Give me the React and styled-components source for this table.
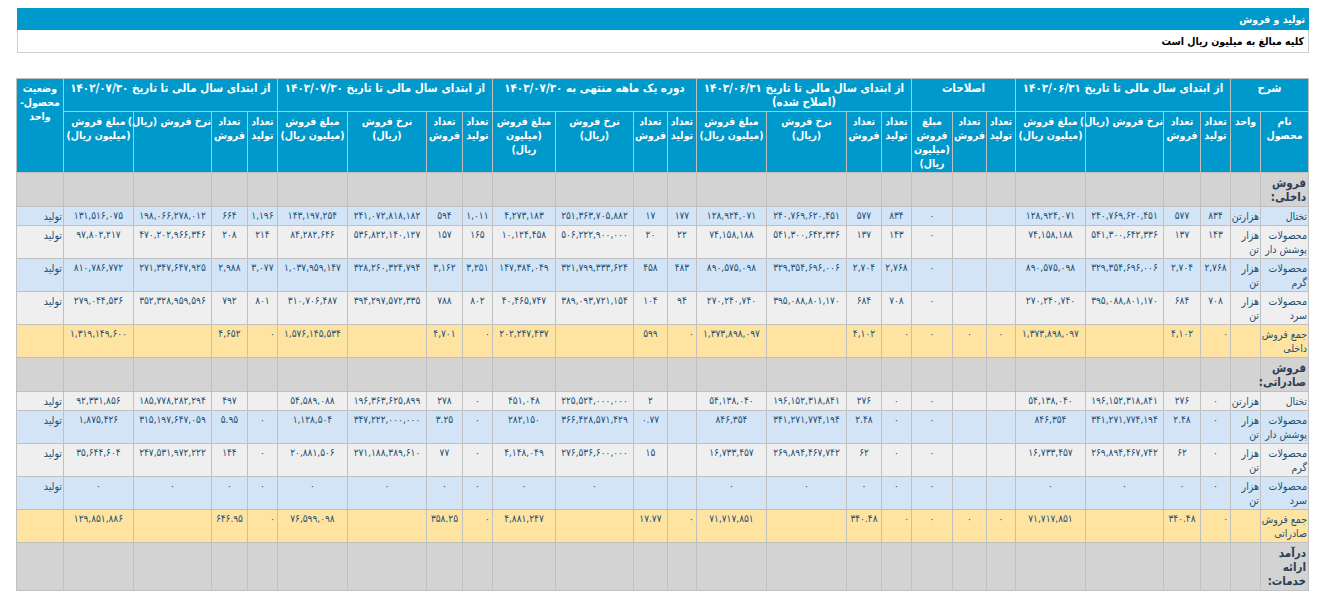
import styled, { createGlobalStyle } from 'styled-components';

const GlobalStyle = createGlobalStyle`
  body {
    margin: 0;
    background: #fff;
    font-family: "DejaVu Sans Condensed", "DejaVu Sans", sans-serif;
  }
`;

const Page = styled.div`
  width: 1292px;
  padding: 8px 0 0 17px;
  direction: rtl;
`;

const TitleBar = styled.div`
  background: #0099cc;
  color: #fff;
  font-weight: bold;
  font-size: 10.5px;
  height: 22px;
  line-height: 22px;
  padding: 0 4px;
`;

const Note = styled.div`
  border: 1px solid #cfcfcf;
  border-top: 0;
  height: 22px;
  line-height: 22px;
  padding: 0 4px;
  font-weight: bold;
  font-size: 10.5px;
  color: #000;
`;

const Table = styled.table`
  margin-top: 25px;
  width: 1292px;
  table-layout: fixed;
  border-collapse: collapse;
  font-size: 10px;
`;

const Col = styled.col`
  width: ${(p) => p.$w}px;
`;

const Th = styled.th`
  background: #0099cc;
  color: #fff;
  font-weight: bold;
  font-size: ${(p) => (p.$group ? 11.5 : 10.5)}px;
  border: 1px solid #c0c0c0;
  padding: 2px 0;
  line-height: 14px;
  vertical-align: top;
  text-align: center;
  white-space: nowrap;
`;

const tones = {
  blue: '#d2e4f5',
  gray: '#efefef',
  total: '#ffe4a1',
  section: '#d3d3d3',
};

const Td = styled.td`
  background: ${(p) => tones[p.$tone]};
  border: 1px solid #c0c0c0;
  padding: 2px 2px;
  line-height: 14px;
  vertical-align: top;
  color: #1d4f76;
`;

const TextCell = styled(Td)`
  padding: 2px 1px;
  text-align: right;
  font-size: 10.5px;
  letter-spacing: -0.2px;
  white-space: nowrap;
`;

const NumCell = styled(Td)`
  text-align: ${(p) => (p.$end ? 'right' : 'center')};
  font-size: 10px;
  letter-spacing: -0.9px;
  white-space: nowrap;
`;

const SectionCell = styled(Td)`
  padding: 3px 2px 2px;
  text-align: right;
  font-weight: bold;
  font-size: 11.5px;
  color: #2b3f55;
`;

const widths = [
  48, 30, 30, 37, 78, 70, 29, 34, 41, 30, 35, 80, 70, 29, 34, 78, 63, 30, 36, 79, 70, 30, 36, 78, 70, 47,
];

const Lines = ({ lines }) =>
  lines.map((l, i) => (
    <span key={i}>
      {i > 0 && <br />}
      {l}
    </span>
  ));

const groupHeads = [
  { span: 2, lines: ['شرح'] },
  { span: 4, lines: ['از ابتدای سال مالی تا تاریخ ۱۴۰۳/۰۶/۳۱'] },
  { span: 3, lines: ['اصلاحات'] },
  { span: 4, lines: ['از ابتدای سال مالی تا تاریخ ۱۴۰۳/۰۶/۳۱', '(اصلاح شده)'] },
  { span: 4, lines: ['دوره یک ماهه منتهی به ۱۴۰۳/۰۷/۳۰'] },
  { span: 4, lines: ['از ابتدای سال مالی تا تاریخ ۱۴۰۳/۰۷/۳۰'] },
  { span: 4, lines: ['از ابتدای سال مالی تا تاریخ ۱۴۰۲/۰۷/۳۰'] },
];

const qty = [['تعداد', 'تولید'], ['تعداد', 'فروش']];

const subHeads = [
  ['نام', 'محصول'],
  ['واحد'],
  ...qty, ['نرخ فروش (ریال)'], ['مبلغ فروش', '(میلیون ریال)'],
  ...qty, ['مبلغ', 'فروش', '(میلیون', 'ریال)'],
  ...qty, ['نرخ فروش', '(ریال)'], ['مبلغ فروش', '(میلیون ریال)'],
  ...qty, ['نرخ فروش', '(ریال)'], ['مبلغ فروش', '(میلیون', 'ریال)'],
  ...qty, ['نرخ فروش', '(ریال)'], ['مبلغ فروش', '(میلیون ریال)'],
  ...qty, ['نرخ فروش (ریال)'], ['مبلغ فروش', '(میلیون ریال)'],
];

// columns holding "تعداد تولید" of each period; in total rows their zero sits at the edge
const productionCols = [0, 7, 11, 15, 19];

const rows = [
  { kind: 'section', lines: ['فروش', 'داخلی:'] },
  {
    tone: 'blue', name: ['تختال'], unit: ['هزارتن'], status: 'تولید',
    v: ['۸۳۴', '۵۷۷', '۲۴۰,۷۶۹,۶۲۰,۴۵۱', '۱۲۸,۹۲۴,۰۷۱', '', '', '۰',
      '۸۳۴', '۵۷۷', '۲۴۰,۷۶۹,۶۲۰,۴۵۱', '۱۲۸,۹۲۴,۰۷۱',
      '۱۷۷', '۱۷', '۲۵۱,۳۶۳,۷۰۵,۸۸۲', '۴,۲۷۳,۱۸۳',
      '۱,۰۱۱', '۵۹۴', '۲۴۱,۰۷۲,۸۱۸,۱۸۲', '۱۴۳,۱۹۷,۲۵۴',
      '۱,۱۹۶', '۶۶۴', '۱۹۸,۰۶۶,۲۷۸,۰۱۲', '۱۳۱,۵۱۶,۰۷۵'],
  },
  {
    tone: 'gray', name: ['محصولات', 'پوشش دار'], unit: ['هزار', 'تن'], status: 'تولید',
    v: ['۱۴۳', '۱۳۷', '۵۴۱,۳۰۰,۶۴۲,۳۳۶', '۷۴,۱۵۸,۱۸۸', '', '', '۰',
      '۱۴۳', '۱۳۷', '۵۴۱,۳۰۰,۶۴۲,۳۳۶', '۷۴,۱۵۸,۱۸۸',
      '۲۲', '۲۰', '۵۰۶,۲۲۲,۹۰۰,۰۰۰', '۱۰,۱۲۴,۴۵۸',
      '۱۶۵', '۱۵۷', '۵۳۶,۸۲۲,۱۴۰,۱۲۷', '۸۴,۲۸۲,۶۴۶',
      '۲۱۴', '۲۰۸', '۴۷۰,۲۰۲,۹۶۶,۳۴۶', '۹۷,۸۰۲,۲۱۷'],
  },
  {
    tone: 'blue', name: ['محصولات', 'گرم'], unit: ['هزار', 'تن'], status: 'تولید',
    v: ['۲,۷۶۸', '۲,۷۰۴', '۳۲۹,۳۵۴,۶۹۶,۰۰۶', '۸۹۰,۵۷۵,۰۹۸', '', '', '۰',
      '۲,۷۶۸', '۲,۷۰۴', '۳۲۹,۳۵۴,۶۹۶,۰۰۶', '۸۹۰,۵۷۵,۰۹۸',
      '۴۸۳', '۴۵۸', '۳۲۱,۷۹۹,۳۳۳,۶۲۴', '۱۴۷,۳۸۴,۰۴۹',
      '۳,۲۵۱', '۳,۱۶۲', '۳۲۸,۲۶۰,۳۲۴,۷۹۴', '۱,۰۳۷,۹۵۹,۱۴۷',
      '۳,۰۷۷', '۲,۹۸۸', '۲۷۱,۳۴۷,۶۴۷,۹۲۵', '۸۱۰,۷۸۶,۷۷۲'],
  },
  {
    tone: 'gray', name: ['محصولات', 'سرد'], unit: ['هزار', 'تن'], status: 'تولید',
    v: ['۷۰۸', '۶۸۴', '۳۹۵,۰۸۸,۸۰۱,۱۷۰', '۲۷۰,۲۴۰,۷۴۰', '', '', '۰',
      '۷۰۸', '۶۸۴', '۳۹۵,۰۸۸,۸۰۱,۱۷۰', '۲۷۰,۲۴۰,۷۴۰',
      '۹۴', '۱۰۴', '۳۸۹,۰۹۳,۷۲۱,۱۵۴', '۴۰,۴۶۵,۷۴۷',
      '۸۰۲', '۷۸۸', '۳۹۴,۲۹۷,۵۷۲,۳۳۵', '۳۱۰,۷۰۶,۴۸۷',
      '۸۰۱', '۷۹۲', '۳۵۲,۳۲۸,۹۵۹,۵۹۶', '۲۷۹,۰۴۴,۵۳۶'],
  },
  {
    tone: 'total', name: ['جمع فروش', 'داخلی'], unit: [''], status: '',
    v: ['۰', '۴,۱۰۲', '', '۱,۳۷۳,۸۹۸,۰۹۷', '۰', '۰', '۰',
      '۰', '۴,۱۰۲', '', '۱,۳۷۳,۸۹۸,۰۹۷',
      '۰', '۵۹۹', '', '۲۰۲,۲۴۷,۴۳۷',
      '۰', '۴,۷۰۱', '', '۱,۵۷۶,۱۴۵,۵۳۴',
      '۰', '۴,۶۵۲', '', '۱,۳۱۹,۱۴۹,۶۰۰'],
  },
  { kind: 'section', lines: ['فروش', 'صادراتی:'] },
  {
    tone: 'gray', name: ['تختال'], unit: ['هزارتن'], status: 'تولید',
    v: ['۰', '۲۷۶', '۱۹۶,۱۵۲,۳۱۸,۸۴۱', '۵۴,۱۳۸,۰۴۰', '', '', '۰',
      '۰', '۲۷۶', '۱۹۶,۱۵۲,۳۱۸,۸۴۱', '۵۴,۱۳۸,۰۴۰',
      '', '۲', '۲۲۵,۵۲۴,۰۰۰,۰۰۰', '۴۵۱,۰۴۸',
      '۰', '۲۷۸', '۱۹۶,۳۶۳,۶۲۵,۸۹۹', '۵۴,۵۸۹,۰۸۸',
      '', '۴۹۷', '۱۸۵,۷۷۸,۲۸۲,۲۹۴', '۹۲,۳۳۱,۸۵۶'],
  },
  {
    tone: 'blue', name: ['محصولات', 'پوشش دار'], unit: ['هزار', 'تن'], status: 'تولید',
    v: ['۰', '۲.۴۸', '۳۴۱,۲۷۱,۷۷۴,۱۹۴', '۸۴۶,۳۵۴', '', '', '۰',
      '۰', '۲.۴۸', '۳۴۱,۲۷۱,۷۷۴,۱۹۴', '۸۴۶,۳۵۴',
      '', '۰.۷۷', '۳۶۶,۴۲۸,۵۷۱,۴۲۹', '۲۸۲,۱۵۰',
      '۰', '۳.۲۵', '۳۴۷,۲۲۲,۰۰۰,۰۰۰', '۱,۱۲۸,۵۰۴',
      '۰', '۵.۹۵', '۳۱۵,۱۹۷,۶۴۷,۰۵۹', '۱,۸۷۵,۴۲۶'],
  },
  {
    tone: 'gray', name: ['محصولات', 'گرم'], unit: ['هزار', 'تن'], status: 'تولید',
    v: ['۰', '۶۲', '۲۶۹,۸۹۴,۴۶۷,۷۴۲', '۱۶,۷۳۳,۴۵۷', '', '', '۰',
      '۰', '۶۲', '۲۶۹,۸۹۴,۴۶۷,۷۴۲', '۱۶,۷۳۳,۴۵۷',
      '', '۱۵', '۲۷۶,۵۳۶,۶۰۰,۰۰۰', '۴,۱۴۸,۰۴۹',
      '۰', '۷۷', '۲۷۱,۱۸۸,۳۸۹,۶۱۰', '۲۰,۸۸۱,۵۰۶',
      '۰', '۱۴۴', '۲۴۷,۵۳۱,۹۷۲,۲۲۲', '۳۵,۶۴۴,۶۰۴'],
  },
  {
    tone: 'blue', name: ['محصولات', 'سرد'], unit: ['هزار', 'تن'], status: 'تولید',
    v: ['۰', '۰', '۰', '۰', '', '', '۰',
      '۰', '۰', '۰', '۰',
      '', '', '۰', '۰',
      '۰', '۰', '۰', '۰',
      '۰', '۰', '۰', '۰'],
  },
  {
    tone: 'total', name: ['جمع فروش', 'صادراتی'], unit: [''], status: '',
    v: ['۰', '۳۴۰.۴۸', '', '۷۱,۷۱۷,۸۵۱', '۰', '۰', '۰',
      '۰', '۳۴۰.۴۸', '', '۷۱,۷۱۷,۸۵۱',
      '۰', '۱۷.۷۷', '', '۴,۸۸۱,۲۴۷',
      '۰', '۳۵۸.۲۵', '', '۷۶,۵۹۹,۰۹۸',
      '۰', '۶۴۶.۹۵', '', '۱۲۹,۸۵۱,۸۸۶'],
  },
  { kind: 'section', lines: ['درآمد', 'ارائه', 'خدمات:'] },
  {
    tone: 'total', name: ['جمع درآمد', 'خدمات'], unit: [''], status: '',
    v: Array(23).fill(''),
  },
];

const SectionRow = ({ lines }) => (
  <tr>
    <SectionCell $tone="section">
      <Lines lines={lines} />
    </SectionCell>
    {widths.slice(1).map((_, i) => (
      <Td key={i} $tone="section" />
    ))}
  </tr>
);

const DataRow = ({ row }) => {
  const isTotal = row.tone === 'total';
  return (
    <tr>
      <TextCell $tone={row.tone}>
        <Lines lines={row.name} />
      </TextCell>
      <TextCell $tone={row.tone}>
        <Lines lines={row.unit} />
      </TextCell>
      {row.v.map((val, i) => (
        <NumCell key={i} $tone={row.tone} $end={isTotal && productionCols.includes(i)}>
          {val}
        </NumCell>
      ))}
      <TextCell $tone={row.tone}>{row.status}</TextCell>
    </tr>
  );
};

const App = () => (
  <>
    <GlobalStyle />
    <Page>
      <TitleBar>تولید و فروش</TitleBar>
      <Note>کلیه مبالغ به میلیون ریال است</Note>
      <Table>
        <colgroup>
          {widths.map((w, i) => (
            <Col key={i} $w={w} />
          ))}
        </colgroup>
        <thead>
          <tr>
            {groupHeads.map((h, i) => (
              <Th key={i} $group colSpan={h.span}>
                <Lines lines={h.lines} />
              </Th>
            ))}
            <Th rowSpan={2}>
              <Lines lines={['وضعیت', 'محصول-', 'واحد']} />
            </Th>
          </tr>
          <tr>
            {subHeads.map((lines, i) => (
              <Th key={i}>
                <Lines lines={lines} />
              </Th>
            ))}
          </tr>
        </thead>
        <tbody>
          {rows.map((row, i) =>
            row.kind === 'section' ? (
              <SectionRow key={i} lines={row.lines} />
            ) : (
              <DataRow key={i} row={row} />
            )
          )}
        </tbody>
      </Table>
    </Page>
  </>
);

export default App;
